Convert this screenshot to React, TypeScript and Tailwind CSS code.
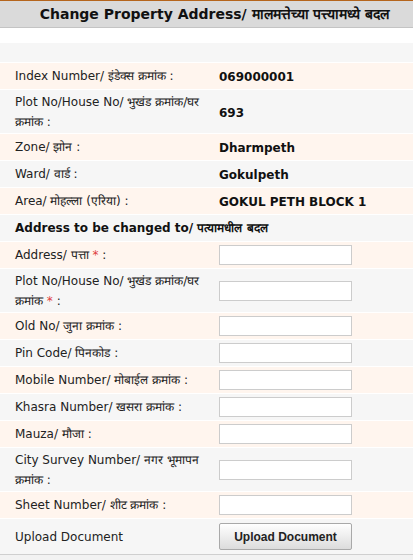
import React from 'react';

interface InfoRow {
  label: string;
  value: string;
  tall?: boolean;
}

const infoRows: InfoRow[] = [
  { label: 'Index Number/ इंडेक्स क्रमांक :', value: '069000001' },
  { label: 'Plot No/House No/ भुखंड क्रमांक/घर क्रमांक :', value: '693', tall: true },
  { label: 'Zone/ झोन :', value: 'Dharmpeth' },
  { label: 'Ward/ वार्ड :', value: 'Gokulpeth' },
  { label: 'Area/ मोहल्ला (एरिया) :', value: 'GOKUL PETH BLOCK 1' },
];

interface FieldRow {
  label: string;
  required?: boolean;
  tall?: boolean;
}

const fieldRows: FieldRow[] = [
  { label: 'Address/ पत्ता', required: true },
  { label: 'Plot No/House No/ भुखंड क्रमांक/घर क्रमांक', required: true, tall: true },
  { label: 'Old No/ जुना क्रमांक' },
  { label: 'Pin Code/ पिनकोड' },
  { label: 'Mobile Number/ मोबाईल क्रमांक' },
  { label: 'Khasra Number/ खसरा क्रमांक' },
  { label: 'Mauza/ मौजा' },
  { label: 'City Survey Number/ नगर भूमापन क्रमांक', tall: true },
  { label: 'Sheet Number/ शीट क्रमांक' },
];

// rows alternate peach / grey, with a 1px white gap between them
const rowBg = (i: number) => (i % 2 === 0 ? 'bg-[#fff5ee]' : 'bg-[#f6f6f6]');

const Row: React.FC<{
  index: number;
  tall?: boolean;
  label: React.ReactNode;
  children?: React.ReactNode;
}> = ({ index, tall, label, children }) => (
  <div
    className={`flex items-center overflow-hidden mb-px ${tall ? 'h-[43px]' : 'h-[26px]'} ${rowBg(index)}`}
  >
    <div
      className={`w-[219px] shrink-0 pl-[15px] pr-[14px] text-[12px] text-[#222] ${tall ? 'leading-[20px]' : 'leading-[18px]'}`}
    >
      {label}
    </div>
    <div className="flex-1">{children}</div>
  </div>
);

const App: React.FC = () => {
  return (
    <div
      className="w-[413px] h-[560px] bg-white overflow-hidden"
      style={{ fontFamily: '"DejaVu Sans", Verdana, sans-serif' }}
    >
      <div className="h-[28px] bg-[#dadada] border-t border-[#b5651d] border-b border-b-[#c4c4c4] flex items-center justify-center pl-[16px]">
        <h1 className="text-[14px] font-bold text-[#111] leading-none whitespace-nowrap">
          Change Property Address/ मालमत्तेच्या पत्त्यामध्ये बदल
        </h1>
      </div>

      <div className="h-[15px]" />
      <div className="h-[19px] bg-[#f6f6f6] mb-px" />

      {infoRows.map((r, i) => (
        <Row key={i} index={i} tall={r.tall} label={r.label}>
          <span className="text-[12px] font-bold text-[#111]">{r.value}</span>
        </Row>
      ))}

      <div className="flex items-center h-[26px] mb-px bg-[#f6f6f6] pl-[15px] text-[12px] leading-[18px] font-bold text-[#111] whitespace-nowrap">
        Address to be changed to/ पत्यामधील बदल
      </div>

      {fieldRows.map((f, i) => (
        <Row
          key={f.label}
          index={i}
          tall={f.tall}
          label={
            <>
              {f.label}
              {f.required && <span className="text-[#e04040]"> *</span>} :
            </>
          }
        >
          <input
            type="text"
            className="block w-[133px] h-[20px] bg-white border border-[#cccccc] outline-none"
          />
        </Row>
      ))}

      <div className="flex items-center h-[36px] bg-[#f6f6f6] border-b border-[#cfcfcf]">
        <div className="w-[219px] shrink-0 pl-[15px] text-[12px] text-[#222]">Upload Document</div>
        <button
          type="button"
          className="w-[133px] h-[27px] rounded-[2px] border border-[#a9a9a9] bg-gradient-to-b from-white to-[#dcdcdc] text-[12px] font-bold text-[#222]"
          style={{ fontFamily: '"Liberation Sans", Arial, sans-serif' }}
        >
          Upload Document
        </button>
      </div>
      <div className="h-[8px] bg-[#f2f2f2]" />
    </div>
  );
};

export default App;
